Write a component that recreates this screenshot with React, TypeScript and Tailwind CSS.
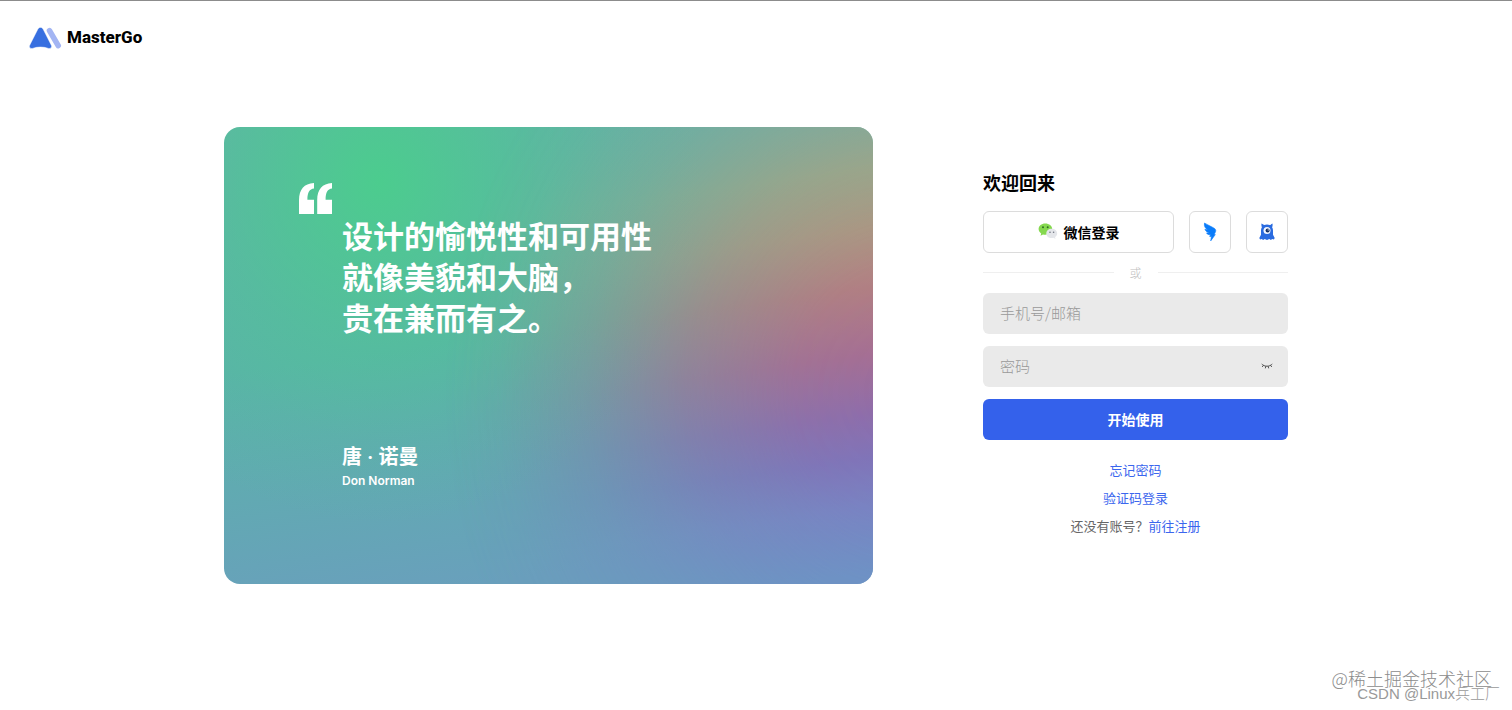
import React, { useState } from "react";

const Logo = () => (
  <svg width="33" height="22" viewBox="0 0 33 22" aria-hidden="true">
    <path d="M20.500 3.600 29.200 18.600" stroke="#a3b5f3" strokeWidth="5.600" strokeLinecap="round" />
    <path
      d="M8.800 2.200c1.200-2.400 4.200-2.400 5.400 0l8.100 16c1 2-.6 3.900-2.800 3.200-5.200-1.800-10.800-1.800-16 0-2.200.7-3.800-1.200-2.800-3.200z"
      fill="#376fe0"
      stroke="#fff"
      strokeWidth=".5"
    />
  </svg>
);

const WechatIcon = () => (
  <svg width="20" height="17" viewBox="0 0 20 17" aria-hidden="true">
    <path d="M7.300.5C3.500.5.6 2.900.6 6.100c0 1.900 1 3.400 2.600 4.500l-.7 2.200 2.500-1.300c.8.2 1.500.3 2.300.3 3.800 0 6.900-2.500 6.900-5.700S11.100.5 7.300.5z" fill="#85d84f" />
    <circle cx="5" cy="4.200" r="1" fill="#2f6d24" />
    <circle cx="9.700" cy="4.200" r="1" fill="#2f6d24" />
    <path d="M13.700 5.800c-3 0-5.400 2-5.400 4.600s2.400 4.700 5.400 4.700c.6 0 1.200-.1 1.800-.3l2 1.100-.5-1.800c1.300-.9 2.200-2.200 2.200-3.700 0-2.600-2.500-4.600-5.500-4.600z" fill="#e4e6ea" />
    <circle cx="12" cy="9.200" r=".8" fill="#6f7480" />
    <circle cx="15.600" cy="9.200" r=".8" fill="#6f7480" />
  </svg>
);

const DingTalkIcon = () => (
  <svg width="14" height="20" viewBox="0 0 14 20" aria-hidden="true">
    <path
      d="M1.500 1c3 2 6.500 3.300 9.200 4.900 1.900 1.100 2.300 2.100 1.900 3.600-.3 1.100-.9 1.900-1.500 3l1.200.1-4.600 6.300.7-4.400H6.700l.8-1.700c-1.800 0-3.200-.5-4-1.900l2.700.1C4 10.100 2.500 9 1.900 7.300l2.900.7C2.700 6.700.7 4.300 1.500 1z"
      fill="#0a7cfa"
      stroke="#0a7cfa"
      strokeWidth=".6"
    />
  </svg>
);

const MonsterIcon = () => (
  <svg width="16" height="18" viewBox="0 0 16 18" aria-hidden="true">
    <path
      d="M2.500.6c1 .7 1.800 1.100 2.600 1.400 1.800-.8 4-.8 5.800 0 .8-.3 1.600-.7 2.600-1.400.2 1.500.1 2.700-.4 3.700.6 1 .9 2.100.9 3.300v4.200l1.700 3.100-.8 1.700-1.700-.6-1.300 1-1.600-.9-2.300 1-2.300-1-1.600.9-1.300-1-1.700.6-.8-1.700L2 11.800V7.600c0-1.200.3-2.300.9-3.300-.5-1-.6-2.200-.4-3.700z"
      fill="#2a6be0"
    />
    <circle cx="8" cy="7.600" r="3.500" fill="#f4f8ff" />
    <circle cx="8.600" cy="7.600" r="2" fill="#122c63" />
    <circle cx="9.200" cy="6.900" r=".6" fill="#fff" />
  </svg>
);

const QuoteMark = () => (
  <svg width="33" height="31" viewBox="0 0 33 31" className="shrink-0" aria-hidden="true">
    <path d="M0 31V17C0 6.500 5 .5 15 0v5.600c-4.500.5-6.600 4-6.600 11.100H15V31z" fill="#fff" />
    <path d="M18.200 31V17c0-10.500 5-16.500 14.800-17v5.600c-4.400.5-6.400 4-6.400 11.100H33V31z" fill="#fff" />
  </svg>
);

const EyeIcon = ({ open }: { open: boolean }) => (
  <svg width="12" height="8" viewBox="0 0 12 8" fill="none" stroke="#555" strokeWidth="1" strokeLinecap="round" aria-hidden="true">
    {open ? (
      <>
        <path d="M1 4c2.500-4 7.500-4 10 0-2.500 4-7.500 4-10 0z" />
        <circle cx="6" cy="4" r="1.300" />
      </>
    ) : (
      <path d="M1 2.300c2.400 2.600 7.600 2.600 10 0M2.500 3.400 1.400 4.700M4.800 4.400l-.4 1.600M7.200 4.400l.4 1.600M9.500 3.400l1.100 1.300" />
    )}
  </svg>
);

const QuoteCard = () => (
  <section className="relative flex-1 overflow-hidden rounded-2xl bg-[radial-gradient(ellipse_50%_75%_at_24%_12%,#4ccc8e_0%,#4ccc8ea8_25%,#4ccc8e55_50%,#4ccc8e1a_75%,#4ccc8e00_100%),linear-gradient(172deg,#60b2a8_0%,#5ab3a8_45%,#69a0bc_90%)]">
    {/* warm to purple glow on the right side */}
    <div className="absolute inset-0 bg-[linear-gradient(172deg,#9da394_8%,#b59f7e_24%,#bc907b_35%,#b87a80_46%,#a86c92_58%,#906baa_69%,#8271b8_77%,#7b80c3_86%,#708dc7_98%)] [mask-image:radial-gradient(ellipse_72%_110%_at_106%_58%,#000_0%,#000000e8_25%,#000000a8_48%,#0000004d_70%,#00000014_88%,transparent_100%)]" />
    <div className="relative flex gap-2.5 pt-14 pr-8 pb-[93px] pl-[75px] text-white">
      <QuoteMark />
      <div className="pt-[31px]">
        <blockquote className="text-[31px] leading-[41px] font-bold">
          设计的愉悦性和可用性
          <br />
          就像美貌和大脑，
          <br />
          贵在兼而有之。
        </blockquote>
        <p className="mt-[106px] font-[Inter,'Noto_Sans_CJK_SC',sans-serif] text-xl leading-7 font-semibold">唐 · 诺曼</p>
        <p className="font-[Inter,sans-serif] text-xs leading-5 font-semibold">Don Norman</p>
      </div>
    </div>
  </section>
);

const LoginForm = () => {
  const [account, setAccount] = useState("");
  const [password, setPassword] = useState("");
  const [showPassword, setShowPassword] = useState(false);

  return (
    <form className="w-[305px] shrink-0 pb-0.5" onSubmit={(e: React.FormEvent) => e.preventDefault()}>
      <h1 className="mb-[17px] text-lg leading-6 font-bold text-black">欢迎回来</h1>

      <div className="flex gap-[15px]">
        <button
          type="button"
          className="flex h-[42px] flex-1 items-center justify-center gap-1.5 rounded-md border border-[#dcdcdc] text-sm font-bold text-black"
        >
          <WechatIcon />
          微信登录
        </button>
        <button
          type="button"
          aria-label="钉钉登录"
          className="flex size-[42px] items-center justify-center rounded-md border border-[#dcdcdc]"
        >
          <DingTalkIcon />
        </button>
        <button
          type="button"
          aria-label="蓝湖登录"
          className="flex size-[42px] items-center justify-center rounded-md border border-[#dcdcdc]"
        >
          <MonsterIcon />
        </button>
      </div>

      <div className="flex h-10 items-center gap-4 text-xs font-light text-[#c0c0c0]">
        <span className="h-px flex-1 bg-[#efefef]" />
        或
        <span className="h-px flex-1 bg-[#efefef]" />
      </div>

      <div className="flex flex-col gap-3">
        <input
          type="text"
          aria-label="手机号/邮箱"
          placeholder="手机号/邮箱"
          value={account}
          onChange={(e) => setAccount(e.target.value)}
          className="h-[41px] w-full rounded-md bg-[#eaeaea] px-[17px] pb-0.5 text-[15px] font-light text-gray-800 outline-none placeholder:text-[#999]"
        />
        <div className="flex h-[41px] items-center rounded-md bg-[#eaeaea] pr-[15px]">
          <input
            type={showPassword ? "text" : "password"}
            aria-label="密码"
            placeholder="密码"
            value={password}
            onChange={(e) => setPassword(e.target.value)}
            className="h-full min-w-0 flex-1 bg-transparent px-[17px] pb-0.5 text-[15px] font-light text-gray-800 outline-none placeholder:text-[#999]"
          />
          <button type="button" aria-label="显示密码" onClick={() => setShowPassword(!showPassword)}>
            <EyeIcon open={showPassword} />
          </button>
        </div>
        <button type="submit" className="h-[41px] rounded-md bg-[#3461eb] text-sm font-bold text-white">
          开始使用
        </button>
      </div>

      <div className="mt-4 flex flex-col items-center text-[13px] leading-7 text-[#3b66ee]">
        <a href="#forgot">忘记密码</a>
        <a href="#code">验证码登录</a>
        <p className="text-[#666]">
          还没有账号？
          <a href="#register" className="text-[#3b66ee]">
            前往注册
          </a>
        </p>
      </div>
    </form>
  );
};

const App: React.FC = () => {
  return (
    <div className="relative flex min-h-screen flex-col border-t border-[#8c8c8c] bg-white font-['Noto_Sans_CJK_SC',sans-serif]">
      <header className="flex h-[74px] items-center px-[29px]">
        <a href="#home" className="flex items-center gap-[5px] font-[Roboto,sans-serif] text-[17px] font-extrabold text-black">
          <Logo />
          MasterGo
        </a>
      </header>

      <main className="mx-auto flex w-full max-w-[1064px] flex-1 items-center gap-[110px] pb-[74px]">
        <QuoteCard />
        <LoginForm />
      </main>

      <div className="absolute right-3 bottom-2 flex flex-col items-end font-light text-[#8c8c8c]">
        <span className="pr-2 text-lg leading-4">@稀土掘金技术社区</span>
        <span className="font-['Liberation_Sans','Noto_Sans_CJK_SC',sans-serif] text-[15px] leading-4 text-[#999]">CSDN @Linux兵工厂</span>
      </div>
    </div>
  );
};

export default App;
